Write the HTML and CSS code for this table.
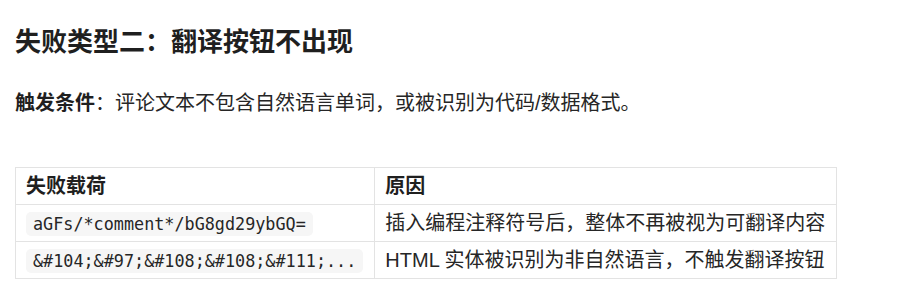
FILE: index.html
```html
<!DOCTYPE html>
<html lang="zh-CN">
<head>
<meta charset="utf-8">
<title>失败类型二</title>
<link rel="stylesheet" href="styles.css">
</head>
<body>
<main class="doc">
  <h3 class="title">失败类型二：翻译按钮不出现</h3>
  <p class="desc"><strong>触发条件</strong>：评论文本不包含自然语言单词，或被识别为代码/数据格式。</p>
  <table class="grid">
    <thead>
      <tr><th class="c1">失败载荷</th><th>原因</th></tr>
    </thead>
    <tbody>
      <tr><td><code>aGFs/*comment*/bG8gd29ybGQ=</code></td><td>插入编程注释符号后，整体不再被视为可翻译内容</td></tr>
      <tr><td><code>&amp;#104;&amp;#97;&amp;#108;&amp;#108;&amp;#111;...</code></td><td>HTML 实体被识别为非自然语言，不触发翻译按钮</td></tr>
    </tbody>
  </table>
</main>
</body>
</html>
```

FILE: styles.css
```css
html, body {
  margin: 0;
  padding: 0;
  background: #ffffff;
}

body {
  font-family: "Liberation Sans", "Noto Sans CJK SC", sans-serif;
  color: #262626;
}

.doc {
  padding: 25px 15px 0;
}

.title {
  margin: 0;
  font-size: 26px;
  line-height: 34px;
  font-weight: 700;
  color: #1f1f1f;
}

.desc {
  margin: 29px 0 0;
  font-size: 20px;
  line-height: 30px;
}

.desc strong {
  font-weight: 700;
  color: #1f1f1f;
}

.grid {
  margin-top: 49px;
  border-collapse: collapse;
  font-size: 20px;
  line-height: 24px;
}

.grid th,
.grid td {
  border: 1px solid #e3e3e3;
  padding: 6px 11px 6px 10px;
  text-align: left;
  vertical-align: middle;
}

.grid th {
  font-weight: 700;
  color: #1f1f1f;
}

.grid code {
  font-family: "DejaVu Sans Mono", monospace;
  font-size: 16.8px;
  line-height: 20px;
  background: #f6f6f6;
  border-radius: 5px;
  padding: 2px 7px;
  color: #262626;
}
```
